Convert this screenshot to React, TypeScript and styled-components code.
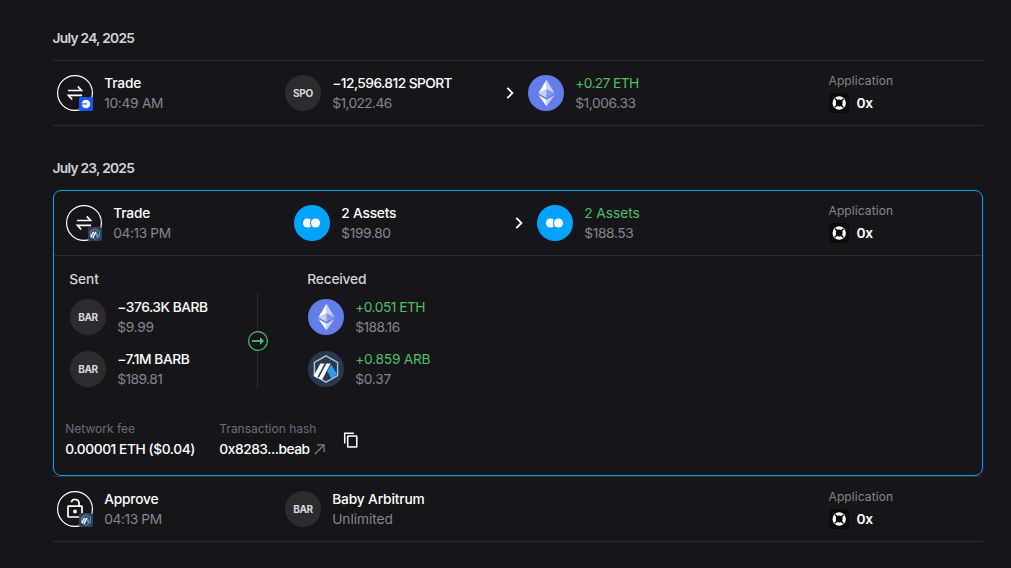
import type { ReactNode } from "react";
import styled, { createGlobalStyle } from "styled-components";

const colours = {
  background: "#16161a",
  line: "#2c2c31",
  avatar: "#2b2b30",
  white: "#ffffff",
  heading: "#d3d3d8",
  grey: "#85858f",
  darkGrey: "#6c6c76",
  green: "#4fbf67",
  blue: "#01a3ff",
};

const GlobalStyle = createGlobalStyle`
  * {
    box-sizing: border-box;
  }
  body {
    margin: 0;
    background: ${colours.background};
    font-family: Inter, "Liberation Sans", sans-serif;
    font-size: 14px;
    line-height: 20px;
  }
  svg {
    display: block;
    flex-shrink: 0;
  }
`;

const Page = styled.main`
  width: 1011px;
  height: 568px;
  padding: 28px 28px 0 53px;
  overflow: hidden;
`;

const Day = styled.section`
  width: 930px;
  margin-bottom: 32px;
`;

const Label = styled.div<{
  $color?: string;
  $weight?: number;
  $size?: number;
  $spacing?: number;
}>`
  color: ${(p) => p.$color ?? colours.white};
  font-weight: ${(p) => p.$weight ?? 500};
  font-size: ${(p) => p.$size ?? 13.75}px;
  letter-spacing: ${(p) => p.$spacing ?? 0}px;
  line-height: 20px;
  white-space: nowrap;
`;

const DayTitle = styled(Label)`
  margin: 0 0 12px -0.5px;
`;

const Row = styled.div`
  display: grid;
  grid-template-columns: 228px 243px 300px 1fr;
  align-items: center;
  height: 66px;
  padding-left: 4px;
  border-top: 1px solid ${colours.line};
  border-bottom: 1px solid ${colours.line};
`;

const ExpandedRow = styled(Row)`
  grid-template-columns: 228px 243px 291px 1fr;
  height: 65px;
  padding-left: 12px;
  border-top: none;
`;

const Card = styled.div`
  height: 286px;
  border: 1px solid ${colours.blue};
  border-radius: 8px;
`;

const Item = styled.div`
  display: flex;
  align-items: center;
  gap: 11.2px;
  height: 40px;
`;

const SentCell = styled.div`
  display: flex;
  align-items: center;
  justify-content: space-between;
  padding-right: 12px;
`;

const IconHolder = styled.div`
  position: relative;
  width: 36px;
  height: 36px;
`;

const ChainBadge = styled.div`
  position: absolute;
  right: 0;
  bottom: 0;
`;

const Avatar = styled.div`
  display: flex;
  align-items: center;
  justify-content: center;
  width: 36px;
  height: 36px;
  border-radius: 50%;
  background: ${colours.avatar};
  color: #d9d9dd;
  font-size: 10px;
  font-weight: 700;
  letter-spacing: -0.3px;
`;

const AppCell = styled.div`
  padding: 0 0 2px 0.5px;
`;

const AppName = styled.div`
  display: flex;
  align-items: center;
  gap: 8px;
  margin-top: 2px;
`;

const Transfers = styled.div`
  display: grid;
  grid-template-columns: 178px 20px 1fr;
  padding: 13px 0 0 16px;
`;

const TransferList = styled.div<{ $indent?: number }>`
  display: flex;
  flex-direction: column;
  padding-left: ${(p) => p.$indent ?? 0}px;

  ${Item} + ${Item} {
    margin-top: 12px;
  }
`;

const ListTitle = styled(Label)`
  margin: 0 0 8px -0.7px;
`;

const Divider = styled.div`
  display: flex;
  flex-direction: column;
  align-items: center;
  height: 96px;
  margin-top: 24px;

  &::before,
  &::after {
    content: "";
    flex: 1;
    width: 1px;
    margin-right: 1px;
    background: ${colours.line};
  }
`;

const Details = styled.div`
  display: flex;
  padding: 30px 0 0 11.3px;
`;

const Detail = styled.div<{ $width: number }>`
  width: ${(p) => p.$width}px;
`;

const Hash = styled.div`
  display: flex;
  align-items: center;
  gap: 4px;
`;

const CopyHolder = styled.div`
  padding-top: 13px;
`;

const SwapIcon = () => (
  <svg width="36" height="36" viewBox="0 0 36 36" fill="none" stroke="#fff">
    <circle cx="18" cy="18" r="17.4" strokeWidth="1.2" />
    <path d="M11 15.5h13.5l-3.7-4.1M25 20.4H11.5l3.7 4.1" strokeWidth="1.7" />
  </svg>
);

const UnlockIcon = () => (
  <svg width="36" height="36" viewBox="0 0 36 36" fill="none" stroke="#fff">
    <circle cx="18" cy="18" r="17.4" strokeWidth="1.2" />
    <rect x="11" y="15.2" width="14" height="10.8" rx="0.6" strokeWidth="1.7" />
    <path d="M14.3 11.2a4 4 0 0 1 7.8 1.2V15" strokeWidth="1.7" />
    <circle cx="18" cy="20.5" r="1.9" fill="#fff" stroke="none" />
  </svg>
);

const BaseBadge = () => (
  <svg width="14" height="14" viewBox="0 0 14 14">
    <rect width="14" height="14" rx="2" fill="#1756f5" />
    <circle cx="7" cy="7" r="4.3" fill="#fff" />
    <path d="M2.5 6.4h5.7v1.1H2.5z" fill="#1756f5" />
  </svg>
);

const ArbitrumMark = () => (
  <>
    <path
      d="M18 4.8 29.6 11.4v13.2L18 31.2 6.4 24.6V11.4z"
      fill="none"
      stroke="#9dcced"
      strokeWidth="1.4"
    />
    <path d="m20.6 17.8 2.5-4.5 6 10.2-3.5 2.1z" fill="#2d9fe8" />
    <path d="m19.3 20 1.8-3 5.2 8.8-3 1.7z" fill="#2d9fe8" />
    <path d="M12.4 12.4h4.2L9 27 5.6 25zM18.4 12.4h4.2l-8.5 16.4-3.5-1.6z" fill="#fff" />
  </>
);

const ArbitrumIcon = () => (
  <svg width="36" height="36" viewBox="0 0 36 36">
    <circle cx="18" cy="18" r="18" fill="#2b374b" />
    <ArbitrumMark />
  </svg>
);

const ArbitrumBadge = () => (
  <svg width="14" height="14" viewBox="0 0 36 36">
    <rect width="36" height="36" rx="6" fill="#2f4059" />
    <ArbitrumMark />
  </svg>
);

const EthereumIcon = () => (
  <svg width="36" height="36" viewBox="0 0 36 36">
    <circle cx="18" cy="18" r="18" fill="#627eea" />
    <path d="M18.5 4.8v9.8l8.1 3.7z" fill="#c6d0f8" />
    <path d="M18.5 4.8 10.4 18.3l8.1-3.7z" fill="#fff" />
    <path d="M18.5 14.6v8.5l8.1-4.8z" fill="#8197ee" />
    <path d="m10.4 18.3 8.1 4.8v-8.5z" fill="#c6d0f8" />
    <path d="M18.5 24.7v6.6l8.1-11.4z" fill="#c6d0f8" />
    <path d="M18.5 31.3v-6.6l-8.1-4.8z" fill="#fff" />
  </svg>
);

const MultipleIcon = () => (
  <svg width="36" height="36" viewBox="0 0 36 36">
    <circle cx="18" cy="18" r="18" fill={colours.blue} />
    <circle cx="13.5" cy="18" r="4.6" fill="#fff" />
    <circle cx="21.5" cy="18" r="5.7" fill={colours.blue} />
    <circle cx="21.5" cy="18" r="4.6" fill="#fff" />
  </svg>
);

const ZeroExIcon = () => (
  <svg width="20" height="20" viewBox="0 0 20 20">
    <rect width="20" height="20" rx="4.5" fill="#0a0a0b" />
    <circle cx="10.2" cy="10" r="6.7" fill="#fff" />
    <circle cx="10.2" cy="10" r="3.4" fill="#0a0a0b" />
    <path
      d="m10.2 10-4.2-4.5M10.2 10l4.5-4.2M10.2 10l4.2 4.5M10.2 10l-4.5 4.2"
      stroke="#0a0a0b"
      strokeWidth="1.5"
    />
  </svg>
);

const Chevron = () => (
  <svg width="12" height="12" viewBox="0 0 12 12" fill="none">
    <path d="m3.3.9 5.1 5.1-5.1 5.1" stroke="#fff" strokeWidth="1.8" />
  </svg>
);

const ArrowCircle = () => (
  <svg width="20" height="20" viewBox="0 0 20 20" fill="none">
    <circle cx="10" cy="10" r="9.4" stroke={colours.green} strokeWidth="1.2" />
    <path d="M4 10h9" stroke={colours.green} strokeWidth="1.8" />
    <path d="m12 6.2 4 3.8-4 3.8z" fill={colours.green} />
  </svg>
);

const ExternalIcon = () => (
  <svg width="12" height="12" viewBox="0 0 12 12" fill="none">
    <path d="m1 11 8.8-8.8M3 1.9h7.1V9" stroke={colours.grey} strokeWidth="1.1" />
  </svg>
);

const CopyIcon = () => (
  <svg width="16" height="16" viewBox="0 0 16 16" fill="none" stroke="#fff">
    <path d="M1.7 11.6V1.2h9.2" strokeWidth="1.5" />
    <rect x="4.7" y="4" width="9.1" height="11" rx="0.6" strokeWidth="1.5" />
  </svg>
);

interface EntryProps {
  icon: ReactNode;
  title: string;
  subtitle: string;
  titleSpacing?: number;
  subtitleSpacing?: number;
  incoming?: boolean;
}

const Entry = ({
  icon,
  title,
  subtitle,
  titleSpacing,
  subtitleSpacing,
  incoming,
}: EntryProps) => (
  <Item>
    {icon}
    <div>
      <Label
        $color={incoming ? colours.green : colours.white}
        $weight={incoming ? 400 : 500}
        $spacing={titleSpacing}
      >
        {title}
      </Label>
      <Label $color={colours.grey} $weight={400} $spacing={subtitleSpacing}>
        {subtitle}
      </Label>
    </div>
  </Item>
);

const ActionIcon = ({ icon, badge }: { icon: ReactNode; badge: ReactNode }) => (
  <IconHolder>
    {icon}
    <ChainBadge>{badge}</ChainBadge>
  </IconHolder>
);

const Application = () => (
  <AppCell>
    <Label $color={colours.grey} $weight={400} $size={12} $spacing={0.1}>
      Application
    </Label>
    <AppName>
      <ZeroExIcon />
      <Label $weight={600} $spacing={-0.3}>
        0x
      </Label>
    </AppName>
  </AppCell>
);

export default function App() {
  return (
    <Page>
      <GlobalStyle />
      <Day>
        <DayTitle $color={colours.heading} $weight={600} $spacing={-0.73}>
          July 24, 2025
        </DayTitle>
        <Row>
          <Entry
            icon={<ActionIcon icon={<SwapIcon />} badge={<BaseBadge />} />}
            title="Trade"
            subtitle="10:49 AM"
            titleSpacing={-0.15}
            subtitleSpacing={-0.3}
          />
          <SentCell>
            <Entry
              icon={<Avatar>SPO</Avatar>}
              title="−12,596.812 SPORT"
              subtitle="$1,022.46"
              titleSpacing={-0.55}
              subtitleSpacing={-0.6}
            />
            <Chevron />
          </SentCell>
          <Entry
            icon={<EthereumIcon />}
            title="+0.27 ETH"
            subtitle="$1,006.33"
            titleSpacing={-0.6}
            subtitleSpacing={-0.4}
            incoming
          />
          <Application />
        </Row>
      </Day>
      <Day>
        <DayTitle $color={colours.heading} $weight={600} $spacing={-0.73}>
          July 23, 2025
        </DayTitle>
        <Card>
          <ExpandedRow>
            <Entry
              icon={<ActionIcon icon={<SwapIcon />} badge={<ArbitrumBadge />} />}
              title="Trade"
              subtitle="04:13 PM"
              titleSpacing={-0.15}
              subtitleSpacing={-0.4}
            />
            <SentCell>
              <Entry
                icon={<MultipleIcon />}
                title="2 Assets"
                subtitle="$199.80"
                titleSpacing={-0.2}
                subtitleSpacing={-0.35}
              />
              <Chevron />
            </SentCell>
            <Entry
              icon={<MultipleIcon />}
              title="2 Assets"
              subtitle="$188.53"
              titleSpacing={-0.05}
              subtitleSpacing={-0.35}
              incoming
            />
            <Application />
          </ExpandedRow>
          <Transfers>
            <TransferList>
              <ListTitle $color={colours.heading} $spacing={-0.1}>
                Sent
              </ListTitle>
              <Entry
                icon={<Avatar>BAR</Avatar>}
                title="−376.3K BARB"
                subtitle="$9.99"
                titleSpacing={-0.45}
                subtitleSpacing={-0.3}
              />
              <Entry
                icon={<Avatar>BAR</Avatar>}
                title="−7.1M BARB"
                subtitle="$189.81"
                titleSpacing={-0.45}
                subtitleSpacing={-0.55}
              />
            </TransferList>
            <Divider>
              <ArrowCircle />
            </Divider>
            <TransferList $indent={40}>
              <ListTitle $color={colours.heading} $spacing={-0.2}>
                Received
              </ListTitle>
              <Entry
                icon={<EthereumIcon />}
                title="+0.051 ETH"
                subtitle="$188.16"
                titleSpacing={-0.5}
                subtitleSpacing={-0.5}
                incoming
              />
              <Entry
                icon={<ArbitrumIcon />}
                title="+0.859 ARB"
                subtitle="$0.37"
                titleSpacing={-0.25}
                subtitleSpacing={-0.25}
                incoming
              />
            </TransferList>
          </Transfers>
          <Details>
            <Detail $width={154}>
              <Label $color={colours.darkGrey} $weight={400} $size={12}>
                Network fee
              </Label>
              <Label $spacing={-0.42}>0.00001 ETH ($0.04)</Label>
            </Detail>
            <Detail $width={124}>
              <Label $color={colours.darkGrey} $weight={400} $size={12}>
                Transaction hash
              </Label>
              <Hash>
                <Label $spacing={-0.45}>0x8283...beab</Label>
                <ExternalIcon />
              </Hash>
            </Detail>
            <CopyHolder>
              <CopyIcon />
            </CopyHolder>
          </Details>
        </Card>
        <Row>
          <Entry
            icon={<ActionIcon icon={<UnlockIcon />} badge={<ArbitrumBadge />} />}
            title="Approve"
            subtitle="04:13 PM"
            titleSpacing={-0.2}
            subtitleSpacing={-0.4}
          />
          <Entry
            icon={<Avatar>BAR</Avatar>}
            title="Baby Arbitrum"
            subtitle="Unlimited"
            titleSpacing={-0.15}
            subtitleSpacing={-0.05}
          />
          <div />
          <Application />
        </Row>
      </Day>
    </Page>
  );
}
